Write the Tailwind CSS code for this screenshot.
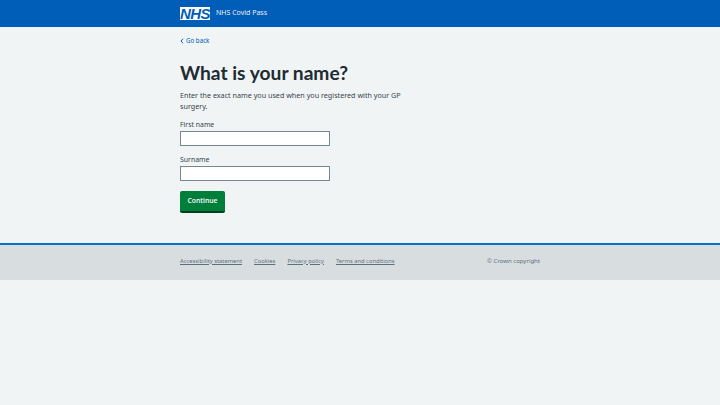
<!DOCTYPE html>
<html lang="en">
<head>
    <meta charset="UTF-8">
    <title>NHS Covid Pass</title>
    <script src="https://cdn.jsdelivr.net/npm/@tailwindcss/browser@4"></script>
</head>
<body class="bg-[#f0f4f5] h-screen font-['Noto_Sans',sans-serif] text-[#212b32] overflow-hidden">
    <!-- Header -->
    <header class="bg-[#005eb8] h-[27px]">
        <div class="w-[360px] mx-auto h-full flex items-center gap-[6px]">
            <div class="w-[30px] h-[13px] bg-white flex items-center justify-center font-['Liberation_Sans',sans-serif] font-bold italic text-[15px] leading-none tracking-[-0.5px] text-[#005eb8]">NHS</div>
            <span class="text-[7px] text-[#e8edee]">NHS Covid Pass</span>
        </div>
    </header>

    <main class="w-[360px] mx-auto h-[216px]">
        <a class="flex items-center gap-[2px] h-[27px] text-[6.2px] text-[#005eb8]">
            <svg width="4" height="6" viewBox="0 0 4 6" fill="none" stroke="#005eb8" stroke-width="1"><path d="M3 0.8 L1 3 L3 5.2"/></svg>
            <span>Go back</span>
        </a>
        <h1 class="mt-[7px] font-['Lato',sans-serif] text-[19.2px] leading-[24px] font-bold">What is your name?</h1>
        <p class="mt-[5px] w-[240px] text-[7.2px] leading-[11px] text-[#3a444b]">Enter the exact name you used when you registered with your GP surgery.</p>

        <label class="block mt-[7px] mb-[1px] text-[6.9px] leading-[11px] text-[#3a444b]">First name</label>
        <input type="text" class="block w-[150px] h-[15px] bg-white border border-[#768692]">

        <label class="block mt-[8px] mb-[1px] text-[6.9px] leading-[11px] text-[#3a444b]">Surname</label>
        <input type="text" class="block w-[150px] h-[15px] bg-white border border-[#768692]">

        <button class="block mt-[10px] w-[45px] h-[22px] bg-[#007f3b] border-b-2 border-[#00401e] rounded-[2px] text-[#f0f4f5] text-[6.8px] font-semibold">Continue</button>
    </main>

    <!-- Footer -->
    <footer class="bg-[#d8dde0] border-t-2 border-[#0072ce] h-[37px]">
        <div class="w-[360px] mx-auto h-full flex items-center justify-between text-[5.8px] text-[#5c6f7c] pb-[3px]">
            <div class="flex gap-[12px]">
                <a class="underline">Accessibility statement</a>
                <a class="underline">Cookies</a>
                <a class="underline">Privacy policy</a>
                <a class="underline">Terms and conditions</a>
            </div>
            <span class="text-[6px]">© Crown copyright</span>
        </div>
    </footer>
</body>
</html>
